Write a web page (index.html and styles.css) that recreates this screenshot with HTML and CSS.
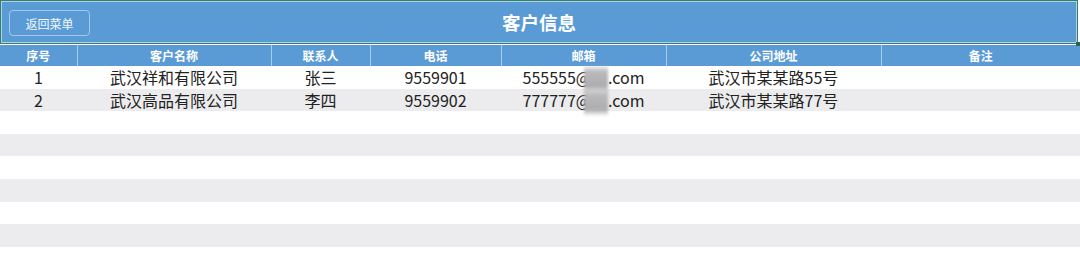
FILE: index.html
```html
<!DOCTYPE html>
<html lang="zh-CN">

<head>
    <meta charset="UTF-8">
    <meta name="viewport" content="width=device-width, initial-scale=1.0">
    <title>客户信息</title>
    <link rel="stylesheet" href="styles.css">
</head>

<body>
    <div class="page">
        <!-- Judul -->
        <div class="title-bar">
            <button class="btn-back">返回菜单</button>
            <h1>客户信息</h1>
            <span class="handle"></span>
        </div>

        <!-- Tabel pelanggan -->
        <table class="grid">
            <colgroup>
                <col class="c1">
                <col class="c2">
                <col class="c3">
                <col class="c4">
                <col class="c5">
                <col class="c6">
                <col class="c7">
            </colgroup>
            <thead>
                <tr>
                    <th>序号</th>
                    <th>客户名称</th>
                    <th>联系人</th>
                    <th>电话</th>
                    <th>邮箱</th>
                    <th>公司地址</th>
                    <th>备注</th>
                </tr>
            </thead>
            <tbody>
                <tr>
                    <td>1</td>
                    <td>武汉祥和有限公司</td>
                    <td>张三</td>
                    <td>9559901</td>
                    <td>555555@<span class="mosaic"></span>.com</td>
                    <td>武汉市某某路55号</td>
                    <td></td>
                </tr>
                <tr>
                    <td>2</td>
                    <td>武汉高品有限公司</td>
                    <td>李四</td>
                    <td>9559902</td>
                    <td>777777@<span class="mosaic"></span>.com</td>
                    <td>武汉市某某路77号</td>
                    <td></td>
                </tr>
                <tr><td></td><td></td><td></td><td></td><td></td><td></td><td></td></tr>
                <tr><td></td><td></td><td></td><td></td><td></td><td></td><td></td></tr>
                <tr><td></td><td></td><td></td><td></td><td></td><td></td><td></td></tr>
                <tr><td></td><td></td><td></td><td></td><td></td><td></td><td></td></tr>
                <tr><td></td><td></td><td></td><td></td><td></td><td></td><td></td></tr>
                <tr><td></td><td></td><td></td><td></td><td></td><td></td><td></td></tr>
                <tr><td></td><td></td><td></td><td></td><td></td><td></td><td></td></tr>
            </tbody>
        </table>
    </div>
</body>

</html>
```

FILE: styles.css
```css
/* Umum */

body {
    margin: 0;
    padding: 0;
    background-color: #fff;
    font-family: "Noto Sans CJK SC", "Noto Sans", sans-serif;
    overflow: hidden;
}

.page {
    width: 1080px;
    height: 263px;
}

/* Judul */

.title-bar {
    position: relative;
    box-sizing: border-box;
    width: 1078px;
    height: 44px;
    background-color: #5b9bd5;
    border: 1px solid #3d7b6c;
    box-shadow: inset 0 0 0 1px #a9d6e3;
    display: flex;
    align-items: center;
    justify-content: center;
}

.title-bar h1 {
    margin: 0;
    color: #fff;
    font-size: 18.5px;
    font-weight: bold;
    line-height: 1;
}

.btn-back {
    position: absolute;
    left: 8px;
    top: 9px;
    width: 81px;
    height: 26px;
    background-color: #5b9bd5;
    border: 1px solid #a5c9e6;
    border-radius: 4px;
    color: #f2f7fc;
    font-family: inherit;
    font-size: 12px;
    padding: 0;
    cursor: pointer;
}

.handle {
    position: absolute;
    right: -3px;
    bottom: -3px;
    width: 4px;
    height: 4px;
    background-color: #2f5f55;
}

/* Tabel */

.grid {
    width: 1080px;
    border-collapse: collapse;
    table-layout: fixed;
}

.c1 { width: 77px; }
.c2 { width: 194px; }
.c3 { width: 99px; }
.c4 { width: 131px; }
.c5 { width: 165px; }
.c6 { width: 215px; }
.c7 { width: 199px; }

.grid th {
    height: 21px;
    padding: 0;
    background-color: #5b9bd5;
    color: #fff;
    font-size: 12px;
    font-weight: bold;
    border-left: 1px solid #a9cdee;
    border-top: 1px solid #fff;
}

.grid th:first-child {
    border-left: none;
}

.grid td {
    height: 22.6px;
    padding: 0;
    text-align: center;
    color: #222;
    font-size: 16px;
    line-height: 1;
    white-space: nowrap;
}

.grid tbody tr:nth-child(even) td {
    background-color: #ececee;
}

.mosaic {
    display: inline-block;
    width: 24px;
    height: 12px;
    margin: 0 0 0 -7px;
    vertical-align: -1px;
    background: linear-gradient(to bottom, #bdbdbf, #a9a9ab);
    filter: blur(1.5px);
    transform: scaleY(1.8);
}
```
